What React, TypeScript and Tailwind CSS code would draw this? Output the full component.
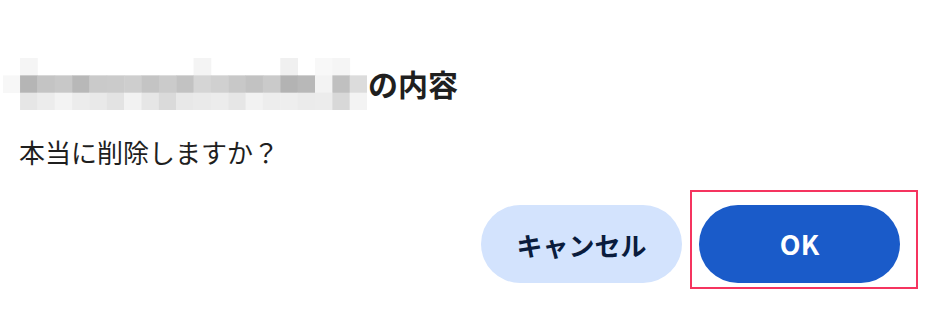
const mosaic: string[][] = [
  ['', '#f5f5f5', '', '', '', '', '', '', '', '', '', '#f4f4f4', '', '', '', '', '#f0f0f0', '', '#f8f8f8', '#f5f5f5', ''],
  ['#f7f7f7', '#b5b5b5', '#c4c4c4', '#c8c8c8', '#b8b8b8', '#cacaca', '#cbcbcb', '#cecece', '#c4c4c4', '#cbcbcb', '#c2c2c2', '#d5d5d5', '#d0d0d0', '#c8c8c8', '#c2c2c2', '#cacaca', '#b3b3b3', '#b8b8b8', '#f3f3f3', '#c0c0c0', '#dcdcdc'],
  ['', '#e6e6e6', '#ececec', '#f3f3f3', '#ececec', '#e9e9e9', '#e3e3e3', '#f2f2f2', '#e6e6e6', '#dadada', '#e8e8e8', '#eaeaea', '#ececec', '#e6e6e6', '#f2f2f2', '#ededed', '#eeeeee', '#ebebeb', '#ececec', '#d8d8d8', '#f3f3f3'],
];

function Mosaic() {
  const size = 17.35;
  return (
    <svg width={364} height={52} viewBox="0 0 364 52" className="shrink-0">
      {mosaic.map((row, r) =>
        row.map((c, i) =>
          c ? <rect key={`${r}-${i}`} x={i * size - 0.3} y={r * size} width={size + 0.4} height={size + 0.4} fill={c} /> : null
        )
      )}
    </svg>
  );
}

export default function App() {
  return (
    <div
      className="w-[934px] h-[314px] bg-white relative overflow-hidden"
      style={{ fontFamily: '"Noto Sans CJK JP", "Noto Sans", sans-serif' }}
    >
      <div className="pt-[58px] pl-[3px] flex items-center">
        <Mosaic />
        <h2 className="ml-[1px] -mt-[2px] text-[30px] leading-[40px] font-bold text-[#1f1f1f]">の内容</h2>
      </div>

      <p className="mt-[26px] pl-[19px] text-[26px] leading-[32px] text-[#1f1f1f]">本当に削除しますか？</p>

      <div className="mt-[37px] pr-[34px] flex justify-end gap-[17px]">
        <button className="w-[201px] h-[78px] rounded-full bg-[#d3e3fd] text-[#0a1c3d] text-[26px] font-bold">
          キャンセル
        </button>
        <div className="relative">
          <button className="w-[201px] h-[78px] rounded-full bg-[#1a5bc9] text-white text-[27px] font-bold">
            OK
          </button>
          <div className="absolute left-[-9px] top-[-15px] w-[228px] h-[99px] border-2 border-[#f5345f] pointer-events-none" />
        </div>
      </div>
    </div>
  );
}
